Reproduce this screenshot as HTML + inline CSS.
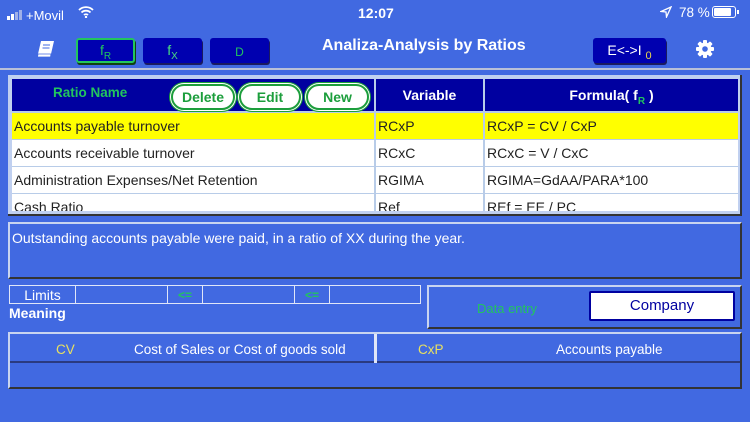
<!DOCTYPE html>
<html><head><meta charset="utf-8"><style>
*{margin:0;padding:0;box-sizing:border-box}
body{width:750px;height:422px;background:#4169e1;font-family:"Liberation Sans",Arial,sans-serif;position:relative;overflow:hidden;color:#fff}
.a{position:absolute}
.btn{position:absolute;background:#0000b0;border-radius:3px;box-shadow:1px 2px 0 #1a1a60;color:#22c55e;font-size:14px;text-align:center}
.c{position:absolute;overflow:hidden;white-space:nowrap;font-size:14px;color:#222;padding-left:2px;line-height:26px}
.pill{position:absolute;top:84px;height:26px;border:2px solid #1c9e3c;border-radius:14px;background:#fff;color:#1c9e3c;font-weight:bold;font-size:14px;text-align:center;line-height:22px;box-shadow:0 0 0 1px #fff,0 0 0 2px #1c9e3c}
</style></head><body>
<div class="a" style="left:7px;top:8px;font-size:13px;">
<span style="display:inline-block;width:3px;height:4px;background:#fff;margin-right:1px"></span><span style="display:inline-block;width:3px;height:6px;background:#fff;margin-right:1px"></span><span style="display:inline-block;width:3px;height:8px;background:#9fb0e8;margin-right:1px"></span><span style="display:inline-block;width:3px;height:10px;background:#9fb0e8;margin-right:4px"></span>+Movil</div>
<svg class="a" style="left:78px;top:6px" width="16" height="12" viewBox="0 0 16 12"><path d="M1 4a10 10 0 0 1 14 0M3.5 6.5a6.5 6.5 0 0 1 9 0M6 9a3 3 0 0 1 4 0" stroke="#fff" stroke-width="1.8" fill="none"/><circle cx="8" cy="11" r="1.2" fill="#fff"/></svg>
<div class="a" style="left:358px;top:5px;font-size:14px;font-weight:bold">12:07</div>
<svg class="a" style="left:660px;top:6px" width="12" height="12" viewBox="0 0 12 12"><path d="M11 1L1 5.5l5 .5.5 5z" stroke="#fff" stroke-width="1.3" fill="none"/></svg>
<div class="a" style="left:679px;top:5px;font-size:13.5px">78 %</div>
<div class="a" style="left:712px;top:6px;width:24px;height:12px;border:1px solid #fff;border-radius:3px;padding:1px"><div style="width:17px;height:8px;background:#fff;border-radius:1px"></div></div>
<div class="a" style="left:737px;top:10px;width:2px;height:4px;background:#fff"></div>
<svg class="a" style="left:36px;top:40px" width="20" height="18" viewBox="0 0 20 18"><path d="M5 1h13l-3 13H2z" fill="#fff"/><path d="M2 14h13l-.5 3H1.5z" fill="#fff" stroke="#4169e1" stroke-width=".8"/><path d="M7 5h7M6.5 8h7" stroke="#4169e1" stroke-width="1"/></svg>
<div class="btn" style="left:76px;top:38px;width:59px;height:25px;border:2px solid #22c55e;box-shadow:1px 2px 0 #104010;line-height:21px">f<sub style="font-size:10px">R</sub></div>
<div class="btn" style="left:143px;top:38px;width:59px;height:25px;line-height:24px;color:#4ade80">f<sub style="font-size:10px">X</sub></div>
<div class="btn" style="left:210px;top:38px;width:59px;height:25px;line-height:28px;font-size:12px">D</div>
<div class="a" style="left:322px;top:37px;font-size:16px;font-weight:bold">Analiza-Analysis by Ratios</div>
<div class="btn" style="left:593px;top:38px;width:73px;height:25px;line-height:24px;color:#fff;font-size:14px">E&lt;-&gt;I <sub style="color:#e8d44d;font-size:11px">0</sub></div>
<svg class="a" style="left:695px;top:39px" width="20" height="20" viewBox="0 0 20 20"><g fill="#fff"><circle cx="10" cy="10" r="6.5"/><g id="t"><rect x="8" y="1" width="4" height="18" rx="1"/></g><use href="#t" transform="rotate(45 10 10)"/><use href="#t" transform="rotate(90 10 10)"/><use href="#t" transform="rotate(135 10 10)"/></g><circle cx="10" cy="10" r="2.8" fill="#4169e1"/></svg>
<div class="a" style="left:0;top:68px;width:750px;height:2px;background:#b8c0d8"></div>
<div class="a" style="left:8px;top:75px;width:734px;height:141px;background:#c0d0f0;border-right:2px solid #333;border-bottom:2px solid #333"></div>
<div class="a" style="left:12px;top:79px;width:726px;height:132px;background:#b8cce8"></div>
<div class="a" style="left:12px;top:79px;width:362px;height:32px;background:#0000a0"></div>
<div class="a" style="left:376px;top:79px;width:107px;height:32px;background:#0000a0;text-align:center;font-weight:bold;font-size:14px;line-height:32px">Variable</div>
<div class="a" style="left:485px;top:79px;width:253px;height:32px;background:#0000a0;text-align:center;font-weight:bold;font-size:14px;line-height:32px">Formula( f<sub style="color:#22c55e;font-size:10px">R</sub> )</div>
<div class="a" style="left:53px;top:85px;color:#22c55e;font-weight:bold;font-size:13.5px">Ratio Name</div>
<div class="pill" style="left:171px;width:64px">Delete</div>
<div class="pill" style="left:239px;width:62px">Edit</div>
<div class="pill" style="left:306px;width:63px">New</div>
<div class="c" style="left:12px;top:113px;width:362px;background:#ffff00">Accounts payable turnover</div>
<div class="c" style="left:376px;top:113px;width:107px;background:#ffff00">RCxP</div>
<div class="c" style="left:485px;top:113px;width:253px;background:#ffff00">RCxP = CV / CxP</div>
<div class="c" style="left:12px;top:140px;width:362px;background:#fff">Accounts receivable turnover</div>
<div class="c" style="left:376px;top:140px;width:107px;background:#fff">RCxC</div>
<div class="c" style="left:485px;top:140px;width:253px;background:#fff">RCxC = V / CxC</div>
<div class="c" style="left:12px;top:167px;width:362px;background:#fff">Administration Expenses/Net Retention</div>
<div class="c" style="left:376px;top:167px;width:107px;background:#fff">RGIMA</div>
<div class="c" style="left:485px;top:167px;width:253px;background:#fff">RGIMA=GdAA/PARA*100</div>
<div class="c" style="left:12px;top:194px;width:362px;height:17px;background:#fff;line-height:27px">Cash Ratio</div>
<div class="c" style="left:376px;top:194px;width:107px;height:17px;background:#fff;line-height:27px">Ref</div>
<div class="c" style="left:485px;top:194px;width:253px;height:17px;background:#fff;line-height:27px">REf = EE / PC</div>
<div class="a" style="left:8px;top:222px;width:734px;height:57px;border:2px solid #c8d4f0;border-right-color:#333;border-bottom-color:#333;padding:6px 0 0 2px;font-size:14px">Outstanding accounts payable were paid, in a ratio of XX during the year.</div>
<div class="a" style="left:9px;top:285px;width:412px;height:19px;border:1px solid #e0e6f8"></div>
<div class="a" style="left:9px;top:285px;width:67px;height:19px;border:1px solid #e0e6f8;text-align:center;font-size:14px;line-height:18px">Limits</div>
<div class="a" style="left:167px;top:285px;width:36px;height:19px;border:1px solid #e0e6f8;text-align:center;color:#22c55e;font-weight:bold;font-size:12px;line-height:18px">&lt;=</div>
<div class="a" style="left:294px;top:285px;width:36px;height:19px;border:1px solid #e0e6f8;text-align:center;color:#22c55e;font-weight:bold;font-size:12px;line-height:18px">&lt;=</div>
<div class="a" style="left:9px;top:305px;font-size:14px;font-weight:bold">Meaning</div>
<div class="a" style="left:427px;top:285px;width:315px;height:44px;border:2px solid #c8d4f0;border-right-color:#333;border-bottom-color:#333"></div>
<div class="a" style="left:477px;top:301px;color:#22c55e;font-size:13px">Data entry</div>
<div class="a" style="left:589px;top:291px;width:146px;height:30px;background:#fff;border:2px solid #0000a0;border-radius:2px;color:#0000a0;text-align:center;font-size:15px;line-height:26px">Company</div>
<div class="a" style="left:8px;top:332px;width:734px;height:57px;border:2px solid #c8d4f0;border-right-color:#333;border-bottom-color:#333"></div>
<div class="a" style="left:10px;top:334px;width:365px;height:29px;border-bottom:2px solid #2a3a80"></div>
<div class="a" style="left:377px;top:334px;width:363px;height:29px;border-bottom:2px solid #2a3a80"></div>
<div class="a" style="left:374px;top:334px;width:3px;height:29px;background:#e0e6f8"></div>
<div class="a" style="left:56px;top:342px;color:#e8e060;font-size:13.5px">CV</div>
<div class="a" style="left:134px;top:342px;font-size:13.5px">Cost of Sales or Cost of goods sold</div>
<div class="a" style="left:418px;top:342px;color:#e8e060;font-size:13.5px">CxP</div>
<div class="a" style="left:556px;top:342px;font-size:13.5px">Accounts payable</div>
</body></html>
